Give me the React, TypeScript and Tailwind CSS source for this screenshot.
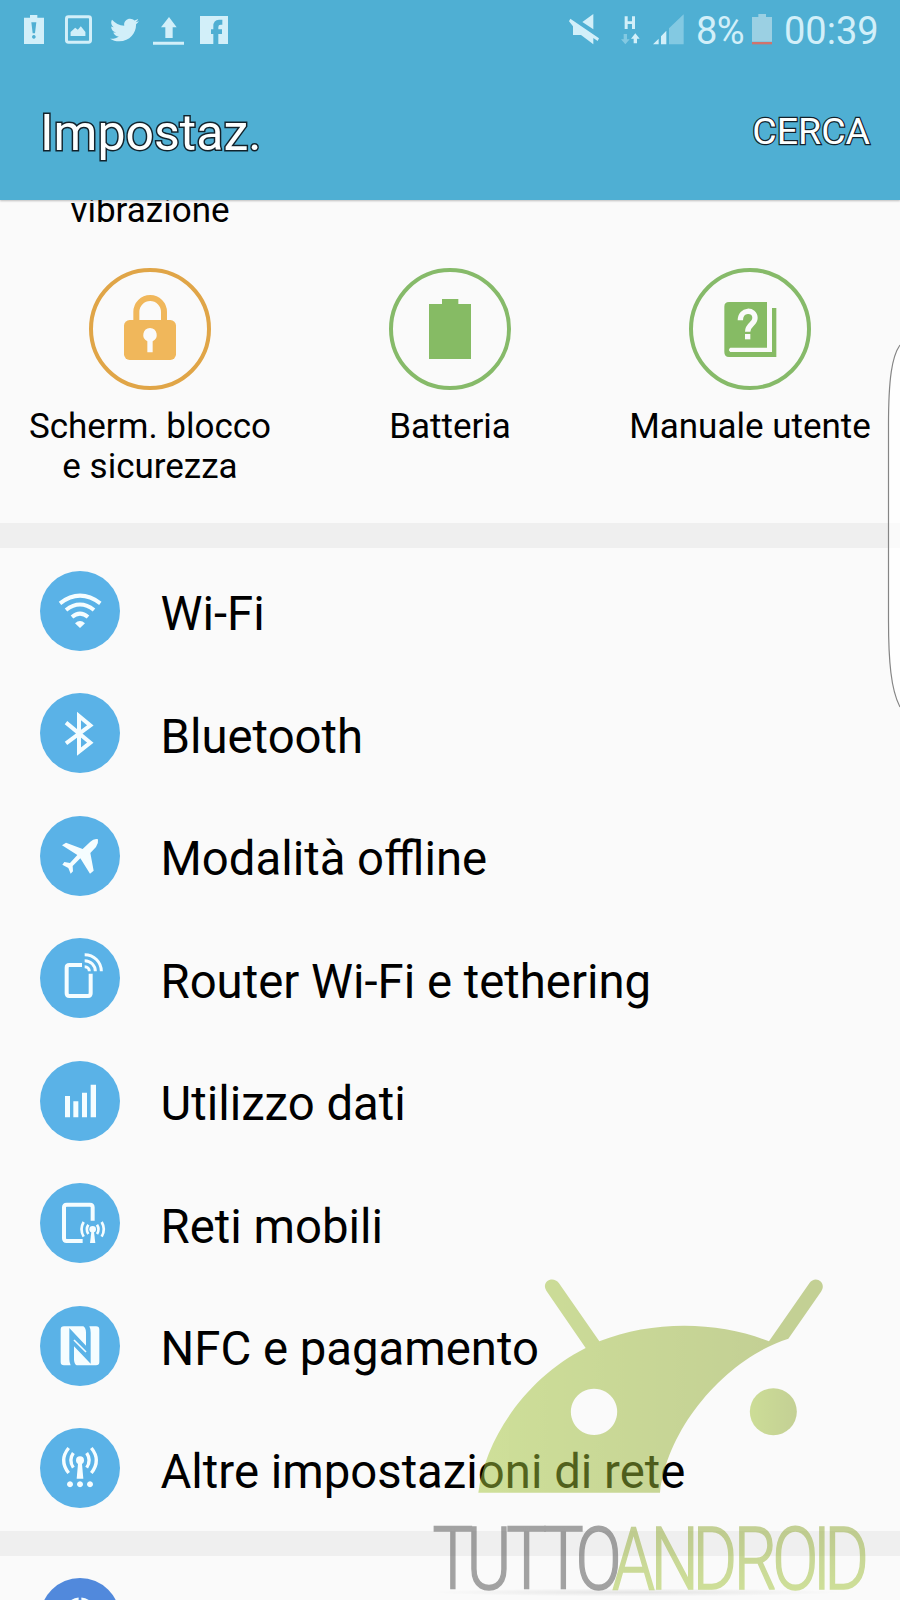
import type { ReactNode } from "react";
import { FaTwitter } from "react-icons/fa";

const PALE = "#d2eff9";

function StatusBar() {
  return (
    <div className="flex h-[60px] items-start justify-between pl-6 pr-6">
      <div className="flex pt-[15px]">
        <svg className="h-[29px] w-5" viewBox="0 0 60 87" fill={PALE}>
          <path fillRule="evenodd" d="M18 0H40V8H60V87H0V8H18ZM22 22L26 55H33L37 22ZM29.500 60a5.500 5.500 0 1 0 .1 0Z" />
        </svg>
        <svg className="ml-[21px] h-[29px] w-[27px]" viewBox="0 0 82 87">
          <rect x="4.500" y="4.500" width="73" height="78" rx="6" fill="none" stroke={PALE} strokeWidth="9" />
          <path d="M17 63V51L31 38L39 44L48 34L62 51V63Z" fill={PALE} />
        </svg>
        <FaTwitter className="ml-[18px] mt-px h-[28px] w-[29px]" color={PALE} preserveAspectRatio="none" />
        <svg className="ml-[14px] mt-[2px] h-7 w-[31px]" viewBox="0 0 93 84" fill={PALE}>
          <path d="M48 0L71 31H59V63H37V31H24ZM0 74H93V83H0Z" />
        </svg>
        <svg className="ml-4 mt-px h-7 w-7" viewBox="0 0 84 84" fill={PALE}>
          <path d="M0 0H84V84H55V54H66V40H55V33Q55 26 62 26H67V11H57Q40 11 40 31V40H33V54H40V84H0Z" />
        </svg>
      </div>
      <div className="flex pt-[14px]">
        <svg className="h-[31px] w-[30px]" viewBox="0 0 90 93" fill={PALE}>
          <path d="M73 0V46L40 24ZM4 14L90 73L86 81L73 72V91L36 63H12V37L0 22Z" />
        </svg>
        <svg className="ml-[22px] h-[31px] w-[19px]" viewBox="0 0 57 93" fill={PALE}>
          <path d="M11 7H20V22H33V7H42V45H33V30H20V45H11Z" />
          <path d="M8 60H18V76H26L13 91L0 76H8Z" opacity=".4" />
          <path d="M43 58L56 74H48V88H38V74H30Z" />
        </svg>
        <svg className="ml-[13px] h-[31px] w-[31px]" viewBox="0 0 93 93" fill={PALE}>
          <path d="M0 91L17 74V91ZM24 67L40 50V91H24Z" />
          <path d="M48 43L92 1V91H48Z" opacity=".4" />
        </svg>
        <span className="ml-[12px] -mt-[1px] w-[51px] text-[38px] leading-[37px] tracking-[-0.5px] text-[#d2eff9]">8%</span>
        <svg className="ml-[5px] h-[31px] w-5" viewBox="0 0 60 93">
          <path d="M19 0H42V9H60V83H0V9H19Z" fill="#9bd0e3" />
          <path d="M0 84H60V91H0Z" fill="#d0736c" />
        </svg>
        <span className="ml-[12px] -mt-[1px] w-[92px] text-[38px] leading-[37px] text-[#d2eff9]">00:39</span>
      </div>
    </div>
  );
}

function Tile({ color, label, children }: { color: string; label: ReactNode; children: ReactNode }) {
  return (
    <div className="flex w-[300px] flex-col items-center">
      <svg className="h-[122px] w-[122px]" viewBox="0 0 366 366">
        <circle cx="183" cy="183" r="177" fill="none" stroke={color} strokeWidth="12" />
        {children}
      </svg>
      <div className="mt-[17px] whitespace-nowrap text-center text-[35px] leading-[40px]">{label}</div>
    </div>
  );
}

function Row({ label, children }: { label: string; children: ReactNode }) {
  return (
    <div className="flex h-[122.500px] items-center pl-10">
      <svg className="h-20 w-20" viewBox="0 0 240 240" fill="none" stroke="#f5fdff">
        <circle cx="120" cy="120" r="120" fill="#5ab2e7" stroke="none" />
        {children}
      </svg>
      <span className="ml-[40.500px] mt-[6.500px] text-[47.300px] leading-[56px]">{label}</span>
    </div>
  );
}

function Watermark() {
  return (
    <svg className="pointer-events-none absolute left-[420px] top-[1260px] h-[340px] w-[480px]" viewBox="0 0 1440 1020">
      <defs>
        <linearGradient id="head" gradientUnits="userSpaceOnUse" x1="180" y1="0" x2="1050" y2="0">
          <stop offset="0" stopColor="#a5c63c" />
          <stop offset="1" stopColor="#90a834" />
        </linearGradient>
        <linearGradient id="eye" x1="0" y1="0" x2="1" y2="0">
          <stop offset="0" stopColor="#a2c238" />
          <stop offset="1" stopColor="#90a834" />
        </linearGradient>
        <linearGradient id="word" x1="0" y1="0" x2="0" y2="1">
          <stop offset=".2" stopColor="#90a834" />
          <stop offset=".8" stopColor="#a5c63c" />
        </linearGradient>
        <radialGradient id="shade">
          <stop offset="0" stopColor="#000" stopOpacity=".09" />
          <stop offset="1" stopColor="#000" stopOpacity="0" />
        </radialGradient>
      </defs>
      <g opacity=".51">
        <path
          fill="url(#head)"
          fillRule="evenodd"
          d="M175 698C195 540 315 355 497 264L379 92C362 64 400 45 417 70L538 244C700 179 900 184 1047 244L1168 70C1186 44 1222 68 1203 95L1105 236C920 295 742 500 720 698ZM522 386a69.500 69.500 0 1 0 .1 0Z"
        />
        <circle cx="1060" cy="455" r="70.500" fill="url(#eye)" />
      </g>
      <ellipse cx="650" cy="997" rx="620" ry="12" fill="url(#shade)" />
      <g fontFamily="Roboto" fontWeight="300" fontSize="262" strokeWidth="5">
        <text
          transform="translate(0 988) scale(.78 1)"
          x="48 179 332 473 598"
          fill="#4f4f4f"
          stroke="#4f4f4f"
          opacity=".51"
        >
          TUTTO
        </text>
        <text
          transform="translate(0 988) scale(.78 1)"
          x="739 887 1048 1207 1355 1511 1555"
          fill="url(#word)"
          stroke="url(#word)"
          opacity=".51"
        >
          ANDROID
        </text>
      </g>
    </svg>
  );
}

export default function App() {
  return (
    <div className="relative flex h-[1600px] w-[900px] flex-col overflow-hidden bg-[#fafafa] font-[Roboto,sans-serif] text-black">
      <header className="z-10 h-[200px] shrink-0 bg-[#4fafd3] shadow-[0_1px_2px_rgba(0,0,0,0.25)]">
        <StatusBar />
        <div className="flex h-[140px] items-center justify-between pl-[40px] pr-[30px] text-[#fdffff] [paint-order:stroke_fill]">
          <h1 className="mt-[6px] text-[50px] leading-[60px] [-webkit-text-stroke:3px_#12222b]">Impostaz.</h1>
          <span className="mt-[2px] text-[37.500px] leading-[44px] [-webkit-text-stroke:2.500px_#12222b]">CERCA</span>
        </div>
      </header>

      <section className="h-[323px] shrink-0">
        <div className="-mt-[9px] w-[300px] text-center text-[35px] leading-[40px]">vibrazione</div>
        <div className="mt-[37px] flex">
          <Tile color="#e0a547" label={<>Scherm. blocco<br />e sicurezza</>}>
            <path d="M142 160V132a41.500 42 0 0 1 83 0V160" fill="none" stroke="#f0b75b" strokeWidth="18" />
            <rect x="105" y="156" width="156" height="120" rx="17" fill="#f0b75b" />
            <path d="M183 180a21 21 0 0 1 8 40V253H175V220a21 21 0 0 1 8-40Z" fill="#fafafa" />
          </Tile>
          <Tile color="#86ba69" label="Batteria">
            <path d="M159 93H208V108H246V273H120V108H159Z" fill="#86bb64" />
          </Tile>
          <Tile color="#86ba69" label="Manuale utente">
            <path d="M120 102H234V243H132C118 243 118 252 132 252H249V120H262V267H120Q106 267 106 252V116Q106 102 120 102Z" fill="#86bb64" />
            <path d="M124 239H245V252H124Q116 245 124 239Z" fill="#fafafa" />
            <path d="M154 157C154 122 198 122 198 150C198 169 176 169 176 191" fill="none" stroke="#fafafa" strokeWidth="16" />
            <path d="M168 198H184V214H168Z" fill="#fafafa" />
          </Tile>
        </div>
      </section>

      <div className="h-[25px] shrink-0 bg-[#efefef]" />

      <section className="h-[982.500px] shrink-0 pt-[1.500px]">
        <Row label="Wi-Fi">
          <path d="M60 97Q120 51 181 97M78 117Q120 84 162 117M96 138Q120 118 144 138" strokeWidth="12" />
          <path d="M105 157Q120 143 135 157L120 171Z" fill="#f5fdff" stroke="none" />
        </Row>
        <Row label="Bluetooth">
          <path d="M78 89L151 149L117 176V69L151 97L78 151" strokeWidth="12" />
        </Row>
        <Row label="Modalità offline">
          <path
            d="M174 70Q162 67 151 77L128 99L78 80L66 88L112 117L90 141L73 138L67 146L85 156L92 173L99 166L98 150L121 127L150 173L161 164L151 111L168 93Q176 82 174 70Z"
            fill="#f5fdff"
            stroke="none"
          />
        </Row>
        <Row label="Router Wi-Fi e tethering">
          <path d="M126 81H88Q80 81 80 89V166Q80 174 88 174H144Q152 174 152 166V107" strokeWidth="12" />
          <path d="M134 50A50 50 0 0 1 184 100M134 68A32 32 0 0 1 166 100M134 86A14 14 0 0 1 148 100" strokeWidth="9" />
        </Row>
        <Row label="Utilizzo dati">
          <path d="M75 105H90V169H75ZM100 121H115V169H100ZM126 95H141V169H126ZM152 71H168V169H152Z" fill="#f5fdff" stroke="none" />
        </Row>
        <Row label="Reti mobili">
          <path d="M158 113V73Q158 65 150 65H80Q72 65 72 73V166Q72 174 80 174H128" strokeWidth="12" />
          <path d="M145 125Q136 139 145 153M131 117Q118 139 131 161M171 125Q180 139 171 153M185 117Q198 139 185 161" strokeWidth="8" />
          <circle cx="158" cy="139" r="10" fill="#f5fdff" stroke="none" />
          <path d="M155 139H161L166 180H150Z" fill="#f5fdff" stroke="none" />
        </Row>
        <Row label="NFC e pagamento">
          <path
            d="M72 61H130Q138 66 138 80V119L88 66V160Q88 170 92 178H72Q62 178 62 168V71Q62 61 72 61ZM168 178H110Q102 174 102 160V121L152 173V80Q152 68 148 61H168Q178 61 178 71V168Q178 178 168 178Z"
            fill="#f5fdff"
            stroke="none"
          />
          <path d="M102 102L138 138" strokeWidth="5" />
        </Row>
        <Row label="Altre impostazioni di rete">
          <path d="M100 75Q85 97 100 119M86 60Q56 97 86 135M140 75Q155 97 140 119M154 60Q184 97 154 135" strokeWidth="10" />
          <circle cx="120" cy="97" r="12" fill="#f5fdff" stroke="none" />
          <path d="M115 97H125L130 152H110Z" fill="#f5fdff" stroke="none" />
          <path d="M90 160a9 9 0 1 0 .1 0ZM120 160a9 9 0 1 0 .1 0ZM150 160a9 9 0 1 0 .1 0Z" fill="#f5fdff" stroke="none" />
        </Row>
      </section>

      <div className="h-[25px] shrink-0 bg-[#efefef]" />

      <div className="mt-[22.500px] h-[22px] overflow-hidden pl-10">
        <svg className="h-20 w-20" viewBox="0 0 240 240" fill="none">
          <circle cx="120" cy="120" r="120" fill="#5189dc" />
          <path d="M94 70Q104 63 116 62M124 62Q136 63 146 70" stroke="#f5fdff" strokeWidth="7" />
        </svg>
      </div>

      <svg className="absolute right-0 top-[335px] h-[380px] w-4" viewBox="0 0 16 380">
        <path d="M16 10C8 21 4.500 44 4.500 90V285C4.500 326 7 355 16 372Z" fill="#fff" fillOpacity=".7" />
        <path d="M16 10C8 21 4.500 44 4.500 90V285C4.500 326 7 355 16 372" fill="none" stroke="#858585" strokeWidth="1.200" />
      </svg>

      <Watermark />
    </div>
  );
}
